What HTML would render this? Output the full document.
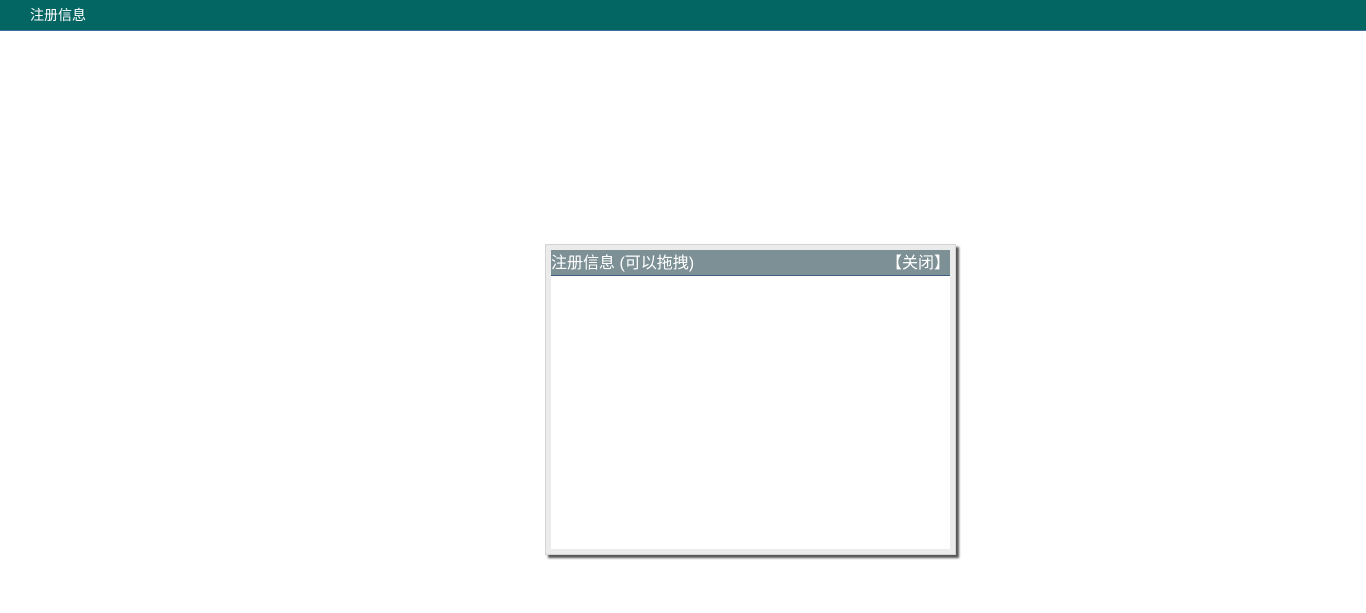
<!DOCTYPE html>
<html><head><meta charset="utf-8"><style>
html,body{margin:0;padding:0;background:#fff;width:1366px;height:613px;overflow:hidden;font-family:"Liberation Sans","Microsoft YaHei","Noto Sans CJK SC",sans-serif}
.top{position:absolute;left:0;top:0;width:1366px;height:30px;background:#036663;border-bottom:1px solid #3d6f9a;color:#fff;font-size:14px;line-height:31px}
.top span{position:absolute;left:30px}
.dlg{position:absolute;left:545px;top:244px;width:399px;height:299px;border:1px solid #d4d4d4;background:#ebebeb;padding:5px;box-shadow:3px 3px 2px #555}
.inner{width:399px;height:299px;background:#fff}
.title{height:25px;background:#7c9095;border-bottom:1px solid #3a5f80;color:#fff;font-size:16px;line-height:28px;position:relative;white-space:nowrap}
.title .r{position:absolute;right:0;top:0}
</style></head><body>
<div class="top"><span>注册信息</span></div>
<div class="dlg"><div class="inner"><div class="title">注册信息 (可以拖拽)<span class="r">【关闭】</span></div></div></div>
</body></html>
